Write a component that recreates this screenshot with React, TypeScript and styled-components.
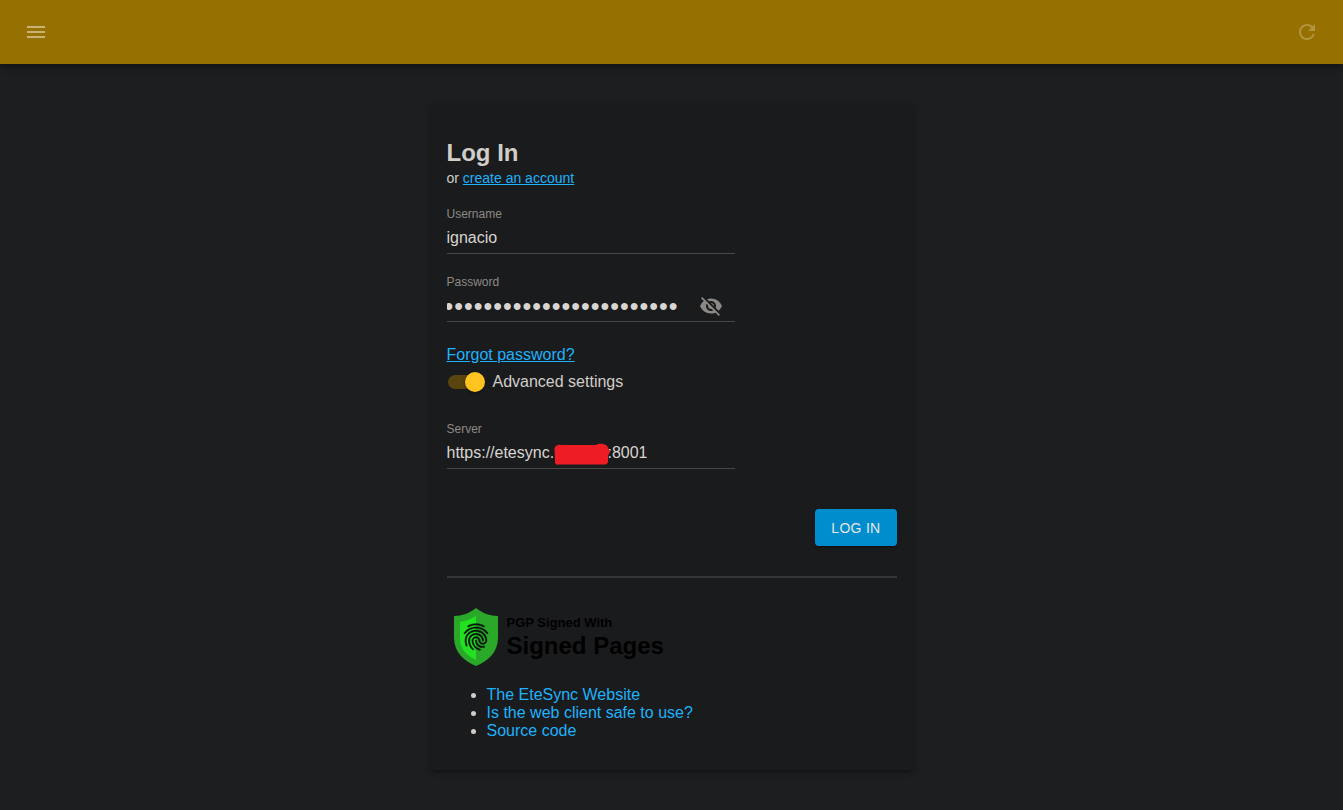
import React, { useState } from 'react';
import styled, { createGlobalStyle } from 'styled-components';
import { MdFingerprint, MdMenu, MdRefresh, MdVisibilityOff } from 'react-icons/md';

const GlobalStyle = createGlobalStyle`
  *, *::before, *::after { box-sizing: border-box; }
  body {
    margin: 0;
    background: #1c1e1f;
    color: #d1cec9;
    font-family: 'Liberation Sans', Arial, sans-serif;
    font-size: 16px;
    line-height: 18px;
  }
`;

const Page = styled.div`
  min-height: 100vh;
`;

const AppBar = styled.header`
  display: flex;
  align-items: center;
  justify-content: space-between;
  height: 64px;
  padding: 0 24px;
  background: #967000;
  box-shadow: 0 2px 4px -1px rgba(0, 0, 0, 0.2), 0 4px 5px rgba(0, 0, 0, 0.14), 0 1px 10px rgba(0, 0, 0, 0.12);
`;

const IconButton = styled.button<{ $color: string; $pad?: number }>`
  display: flex;
  padding: 0 ${({ $pad = 0 }) => $pad}px;
  border: 0;
  background: none;
  color: ${({ $color }) => $color};
  font-size: 24px;
  cursor: pointer;
`;

const Card = styled.main`
  max-width: 482px;
  margin: 40px auto;
  padding: 36px 16px 30px;
  border-radius: 4px;
  background: #1a1b1d;
  box-shadow: 0 3px 3px -2px rgba(0, 0, 0, 0.2), 0 3px 4px rgba(0, 0, 0, 0.14), 0 1px 8px rgba(0, 0, 0, 0.12);
`;

const Title = styled.h1`
  margin: 0 0 2px;
  font-size: 24px;
  line-height: 26px;
`;

const Subtitle = styled.p`
  margin: 0 0 18px;
  font-size: 14px;
  line-height: 20px;
`;

const Link = styled.a<{ $plain?: boolean }>`
  color: #1fb2fb;
  text-decoration: ${({ $plain }) => ($plain ? 'none' : 'underline')};
`;

const Field = styled.div`
  max-width: 288px;
  margin-bottom: 20px;
`;

const FieldLabel = styled.label`
  display: block;
  color: #8d8a86;
  font-size: 12px;
  line-height: 16px;
`;

const InputRow = styled.div`
  position: relative;
  display: flex;
  align-items: center;
  height: 32px;
  border-bottom: 1px solid #474843;
`;

const TextInput = styled.input`
  flex: 1;
  min-width: 0;
  height: 31px;
  padding: 0;
  border: 0;
  outline: 0;
  background: none;
  color: #d8d5d0;
  font: inherit;
`;

const PasswordInput = styled(TextInput)`
  margin-right: 8px;
  padding-top: 2px;
  font-size: 25px;
  line-height: 27px;
  letter-spacing: 1px;
  direction: rtl;
`;

const Redaction = styled.svg`
  position: absolute;
  left: 107px;
  top: 6px;
`;

const Forgot = styled.p`
  margin: 24px 0 0;
`;

const SwitchLabel = styled.label`
  display: flex;
  align-items: center;
  gap: 8px;
  width: fit-content;
  height: 36px;
  margin-bottom: 21px;
  cursor: pointer;
`;

const Switch = styled.input`
  appearance: none;
  display: grid;
  align-items: center;
  width: 38px;
  height: 20px;
  margin: 0;
  cursor: pointer;
  &::before, &::after {
    content: '';
    grid-area: 1 / 1;
  }
  &::before {
    width: 34px;
    height: 14px;
    margin-left: 1px;
    border-radius: 7px;
    background: #5a450f;
  }
  &::after {
    width: 20px;
    height: 20px;
    border-radius: 50%;
    background: #ffc41f;
    box-shadow: 0 1px 3px rgba(0, 0, 0, 0.4);
  }
  &:checked::after { justify-self: end; }
`;

const Actions = styled.div`
  display: flex;
  justify-content: flex-end;
  padding-top: 20px;
`;

const SubmitButton = styled.button`
  height: 37px;
  padding: 0 16px;
  border: 0;
  border-radius: 4px;
  background: #008dcd;
  color: #e8e6e3;
  font: inherit;
  font-size: 14px;
  letter-spacing: 0.02em;
  text-transform: uppercase;
  box-shadow: 0 3px 1px -2px rgba(0, 0, 0, 0.2), 0 2px 2px rgba(0, 0, 0, 0.14), 0 1px 5px rgba(0, 0, 0, 0.12);
  cursor: pointer;
`;

const Divider = styled.hr`
  height: 2px;
  margin: 30px 0;
  border: 0;
  background: #343536;
`;

const SignedBadge = styled.a`
  display: flex;
  align-items: center;
  gap: 9px;
  width: fit-content;
  padding-left: 7px;
  color: #000;
  font-weight: bold;
  text-decoration: none;
`;

const BadgeText = styled.span`
  display: flex;
  flex-direction: column;
`;

const BadgeSmall = styled.span`
  font-size: 13px;
  line-height: 18px;
`;

const BadgeLarge = styled.span`
  font-size: 24px;
  line-height: 28px;
`;

/* The icon's empty bounding path must stay invisible when the ridges are thickened. */
const Fingerprint = styled(MdFingerprint)`
  color: #051208;
  stroke-width: 0.4;
  path[fill='none'] { stroke: none; }
`;

const LinkList = styled.ul`
  margin: 20px 0 0;
  padding-left: 40px;
`;

const Shield = () => (
  <svg width="44" height="58" viewBox="0 0 44 58" aria-hidden="true">
    <path d="M22 0C16 5 8 8 0 8v22c0 14 10 23 22 28c12-5 22-14 22-28V8C36 8 28 5 22 0z" fill="#2aa82a" />
    <path d="M22 8C17 11 12 13 6 14v17c0 10 7 17 16 21z" fill="#22e022" />
    <Fingerprint x="6" y="13" size={32} />
  </svg>
);

export default function App() {
  const [username, setUsername] = useState('ignacio');
  const [password, setPassword] = useState('correcthorsebatterystapl');
  const [advanced, setAdvanced] = useState(true);
  const [server, setServer] = useState('https://etesync.' + ' '.repeat(12) + ':8001');

  return (
    <Page>
      <GlobalStyle />
      <AppBar>
        <IconButton type="button" aria-label="Menu" $color="#c8b373"><MdMenu /></IconButton>
        <IconButton type="button" aria-label="Refresh" $color="#b1953f"><MdRefresh /></IconButton>
      </AppBar>
      <Card>
        <form onSubmit={(e) => e.preventDefault()}>
          <Title>Log In</Title>
          <Subtitle>or <Link href="#signup">create an account</Link></Subtitle>
          <Field>
            <FieldLabel htmlFor="username">Username</FieldLabel>
            <InputRow>
              <TextInput id="username" value={username} onChange={(e) => setUsername(e.target.value)} />
            </InputRow>
          </Field>
          <Field>
            <FieldLabel htmlFor="password">Password</FieldLabel>
            <InputRow>
              <PasswordInput id="password" type="password" value={password} onChange={(e) => setPassword(e.target.value)} />
              <IconButton type="button" aria-label="Toggle password visibility" $color="#8b8886" $pad={12}><MdVisibilityOff /></IconButton>
            </InputRow>
          </Field>
          <Forgot><Link href="#forgot">Forgot password?</Link></Forgot>
          <SwitchLabel>
            <Switch type="checkbox" role="switch" checked={advanced} onChange={(e) => setAdvanced(e.target.checked)} />
            Advanced settings
          </SwitchLabel>
          <Field>
            <FieldLabel htmlFor="server">Server</FieldLabel>
            <InputRow>
              <TextInput id="server" value={server} onChange={(e) => setServer(e.target.value)} />
              <Redaction width="56" height="23" viewBox="0 0 56 23" aria-hidden="true">
                <path d="M4 2C6 1 9 2.500 12 2H42C45 0 50 .5 52.500 2.500C54.500 4 54 6 56 8C56 10 54.500 11 54 13V19C53.500 21 52 21.500 50 21.500H5C2 22 1 21 1 18.500L.5 6C.5 4 2 2.500 4 2z" fill="#ee1c24" />
              </Redaction>
            </InputRow>
          </Field>
          <Actions><SubmitButton type="submit">Log In</SubmitButton></Actions>
        </form>
        <Divider />
        <SignedBadge href="#signed-pages">
          <Shield />
          <BadgeText>
            <BadgeSmall>PGP Signed With</BadgeSmall>
            <BadgeLarge>Signed Pages</BadgeLarge>
          </BadgeText>
        </SignedBadge>
        <LinkList>
          <li><Link $plain href="#website">The EteSync Website</Link></li>
          <li><Link $plain href="#safety">Is the web client safe to use?</Link></li>
          <li><Link $plain href="#source">Source code</Link></li>
        </LinkList>
      </Card>
    </Page>
  );
}
